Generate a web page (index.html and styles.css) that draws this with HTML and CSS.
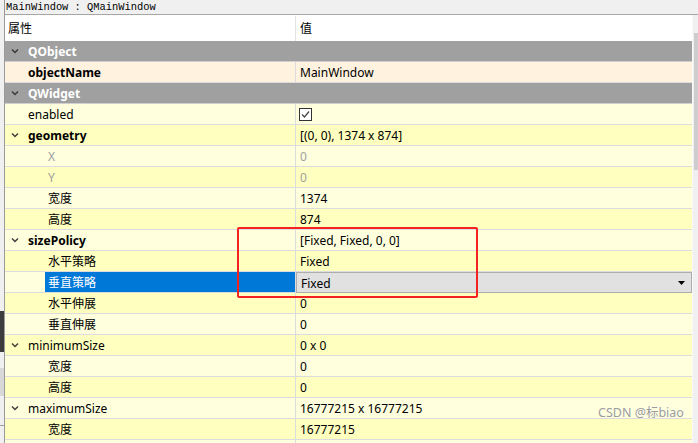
FILE: index.html
```html
<!DOCTYPE html>
<html>
<head>
<meta charset="utf-8">
<link rel="stylesheet" href="styles.css">
</head>
<body>
<div class="app">
  <div class="edge">
    <div class="seg s1"></div>
    <div class="seg s2"></div>
    <div class="seg s3"></div>
    <div class="seg s4"></div>
    <div class="seg s5"></div>
  </div>
  <div class="main">
    <div class="title">MainWindow : QMainWindow</div>
    <div class="tree">
      <div class="rows">
        <div class="hdr"><div class="hn">属性</div><div class="hv">值</div></div>

        <div class="row g"><div class="nm"><span class="ind i1"><svg class="chev" width="8" height="6" viewBox="0 0 8 6"><polyline points="1,1.5 4,4.5 7,1.5"/></svg></span><span class="lbl">QObject</span></div></div>
        <div class="row p"><div class="nm"><span class="ind i1"></span><span class="lbl bold">objectName</span></div><div class="val">MainWindow</div></div>
        <div class="row g"><div class="nm"><span class="ind i1"><svg class="chev" width="8" height="6" viewBox="0 0 8 6"><polyline points="1,1.5 4,4.5 7,1.5"/></svg></span><span class="lbl">QWidget</span></div></div>
        <div class="row b"><div class="nm"><span class="ind i1"></span><span class="lbl">enabled</span></div><div class="val"><span class="check"><svg width="11" height="11" viewBox="0 0 11 11"><polyline points="2,5.5 4.5,8 9,2.5"/></svg></span></div></div>
        <div class="row a"><div class="nm"><span class="ind i1"><svg class="chev" width="8" height="6" viewBox="0 0 8 6"><polyline points="1,1.5 4,4.5 7,1.5"/></svg></span><span class="lbl bold">geometry</span></div><div class="val">[(0, 0), 1374 x 874]</div></div>
        <div class="row b"><div class="nm"><span class="ind i2"></span><span class="lbl dis">X</span></div><div class="val dis">0</div></div>
        <div class="row a"><div class="nm"><span class="ind i2"></span><span class="lbl dis">Y</span></div><div class="val dis">0</div></div>
        <div class="row b"><div class="nm"><span class="ind i2"></span><span class="lbl">宽度</span></div><div class="val">1374</div></div>
        <div class="row a"><div class="nm"><span class="ind i2"></span><span class="lbl">高度</span></div><div class="val">874</div></div>
        <div class="row b"><div class="nm"><span class="ind i1"><svg class="chev" width="8" height="6" viewBox="0 0 8 6"><polyline points="1,1.5 4,4.5 7,1.5"/></svg></span><span class="lbl bold">sizePolicy</span></div><div class="val">[Fixed, Fixed, 0, 0]</div></div>
        <div class="row a"><div class="nm"><span class="ind i2"></span><span class="lbl">水平策略</span></div><div class="val">Fixed</div></div>
        <div class="row b"><div class="nm"><span class="ind i2"></span><span class="lbl sel">垂直策略</span></div><div class="val edit"><div class="combo"><span>Fixed</span><svg class="tri" width="7" height="4" viewBox="0 0 7 4"><polygon points="0,0 7,0 3.5,4"/></svg></div></div></div>
        <div class="row a"><div class="nm"><span class="ind i2"></span><span class="lbl">水平伸展</span></div><div class="val">0</div></div>
        <div class="row b"><div class="nm"><span class="ind i2"></span><span class="lbl">垂直伸展</span></div><div class="val">0</div></div>
        <div class="row a"><div class="nm"><span class="ind i1"><svg class="chev" width="8" height="6" viewBox="0 0 8 6"><polyline points="1,1.5 4,4.5 7,1.5"/></svg></span><span class="lbl">minimumSize</span></div><div class="val">0 x 0</div></div>
        <div class="row b"><div class="nm"><span class="ind i2"></span><span class="lbl">宽度</span></div><div class="val">0</div></div>
        <div class="row a"><div class="nm"><span class="ind i2"></span><span class="lbl">高度</span></div><div class="val">0</div></div>
        <div class="row b"><div class="nm"><span class="ind i1"><svg class="chev" width="8" height="6" viewBox="0 0 8 6"><polyline points="1,1.5 4,4.5 7,1.5"/></svg></span><span class="lbl">maximumSize</span></div><div class="val">16777215 x 16777215</div></div>
        <div class="row a"><div class="nm"><span class="ind i2"></span><span class="lbl">宽度</span></div><div class="val">16777215</div></div>
        <div class="row b"><div class="nm"><span class="ind i2"></span><span class="lbl"></span></div><div class="val"></div></div>
      </div>
      <div class="scroll"><div class="thumb"></div></div>
    </div>
  </div>
</div>
<div class="redbox"></div>
<div class="mark">CSDN @标biao</div>
</body>
</html>
```

FILE: styles.css
```css
html, body {
  margin: 0;
  padding: 0;
}
body {
  width: 698px;
  height: 443px;
  overflow: hidden;
  background: #f0f0f0;
  font-family: "Noto Sans", "Noto Sans CJK SC", sans-serif;
  font-size: 12px;
  color: #000;
  position: relative;
}
.app {
  display: flex;
  height: 443px;
}
.edge {
  width: 4px;
  border-right: 1px solid #9a9a9a;
  display: flex;
  flex-direction: column;
}
.seg { background: #f0f0f0; }
.s1 { height: 311px; }
.s2 { height: 41px; background: #3c3c3c; }
.s3 { height: 16px; }
.s4 { height: 28px; background: #d8d8d8; }
.s5 { flex: 1; border-top: 29px solid #f0f0f0; box-shadow: inset 0 1px 0 #a0a0a0; }
.main {
  flex: 1;
  display: flex;
  flex-direction: column;
  min-width: 0;
}
.title {
  height: 14px;
  line-height: 14px;
  border-bottom: 1px solid #a6a6a6;
  font-family: "Liberation Mono", monospace;
  font-size: 10.4px;
  padding-left: 1px;
  white-space: nowrap;
}
.tree {
  flex: 1;
  display: flex;
  min-height: 0;
}
.rows {
  flex: 1;
  display: flex;
  flex-direction: column;
  min-width: 0;
  background: #ffffff;
}
.scroll {
  width: 6px;
  background: #f0f0f0;
  border-left: 1px solid #fafafa;
  box-sizing: border-box;
  padding-top: 18px;
  padding-left: 1px;
}
.thumb {
  height: 137px;
  background: #cdcdcd;
}
.hdr {
  height: 26px;
  display: flex;
  background: #fff;
  line-height: 26px;
  padding-top: 1px;
  box-sizing: border-box;
  flex-shrink: 0;
}
.hn {
  width: 291px;
  box-sizing: border-box;
  border-right: 1px solid #e4e4e4;
  padding-left: 3px;
  height: 25px;
}
.hv {
  flex: 1;
  padding-left: 4px;
}
.row {
  height: 21px;
  box-sizing: border-box;
  border-bottom: 1px solid #dcdcdc;
  display: flex;
  flex-shrink: 0;
  line-height: 20px;
  white-space: nowrap;
}
.row.g { background: #a0a0a0; border-bottom-color: #d0d0d0; }
.row.g .nm { border-right: none; }
.row.g .lbl { color: #fff; font-weight: bold; }
.row.p { background: #fff2de; }
.row.a { background: #ffffbf; }
.row.b { background: #ffffde; }
.nm {
  width: 291px;
  box-sizing: border-box;
  border-right: 1px solid #dcdcdc;
  display: flex;
  height: 20px;
  overflow: hidden;
}
.ind {
  display: flex;
  align-items: center;
  padding-left: 6px;
  box-sizing: border-box;
  flex-shrink: 0;
}
.i1 { width: 20px; }
.i2 { width: 40px; }
.chev {
  fill: none;
  stroke: #404040;
  stroke-width: 1.5;
}
.row.g .chev { stroke: #3a3a3a; }
.lbl {
  flex: 1;
  padding-left: 3px;
  padding-top: 1px;
  line-height: 19px;
}
.bold { font-weight: bold; }
.dis { color: #a0a0a0; }
.lbl.sel {
  background: #0078d7;
  color: #fff;
}
.val {
  flex: 1;
  padding-left: 4px;
  padding-top: 1px;
  line-height: 19px;
  height: 20px;
  box-sizing: border-box;
  min-width: 0;
  display: flex;
  align-items: center;
}
.val.edit {
  padding-left: 0;
  padding-top: 0;
  align-items: stretch;
}
.combo {
  flex: 1;
  background: #e1e1e1;
  border: 1px solid #adadad;
  box-sizing: border-box;
  display: flex;
  align-items: center;
  justify-content: space-between;
  padding: 1px 6px 0 4px;
  height: 21px;
  margin-bottom: -1px;
}
.tri { fill: #000; }
.check {
  width: 13px;
  height: 13px;
  box-sizing: border-box;
  border: 1px solid #333;
  background: #fff;
  display: flex;
  align-items: center;
  justify-content: center;
  margin-left: -1px;
}
.check polyline {
  fill: none;
  stroke: #444;
  stroke-width: 1.2;
}
.redbox {
  position: absolute;
  left: 237px;
  top: 227px;
  width: 241px;
  height: 71px;
  box-sizing: border-box;
  border: 2px solid #f52222;
  border-radius: 2px;
}
.mark {
  position: absolute;
  left: 598px;
  top: 402px;
  font-size: 12.5px;
  color: #9c9c9c;
  text-shadow: 0 0 1px #fff;
  white-space: nowrap;
}
```
